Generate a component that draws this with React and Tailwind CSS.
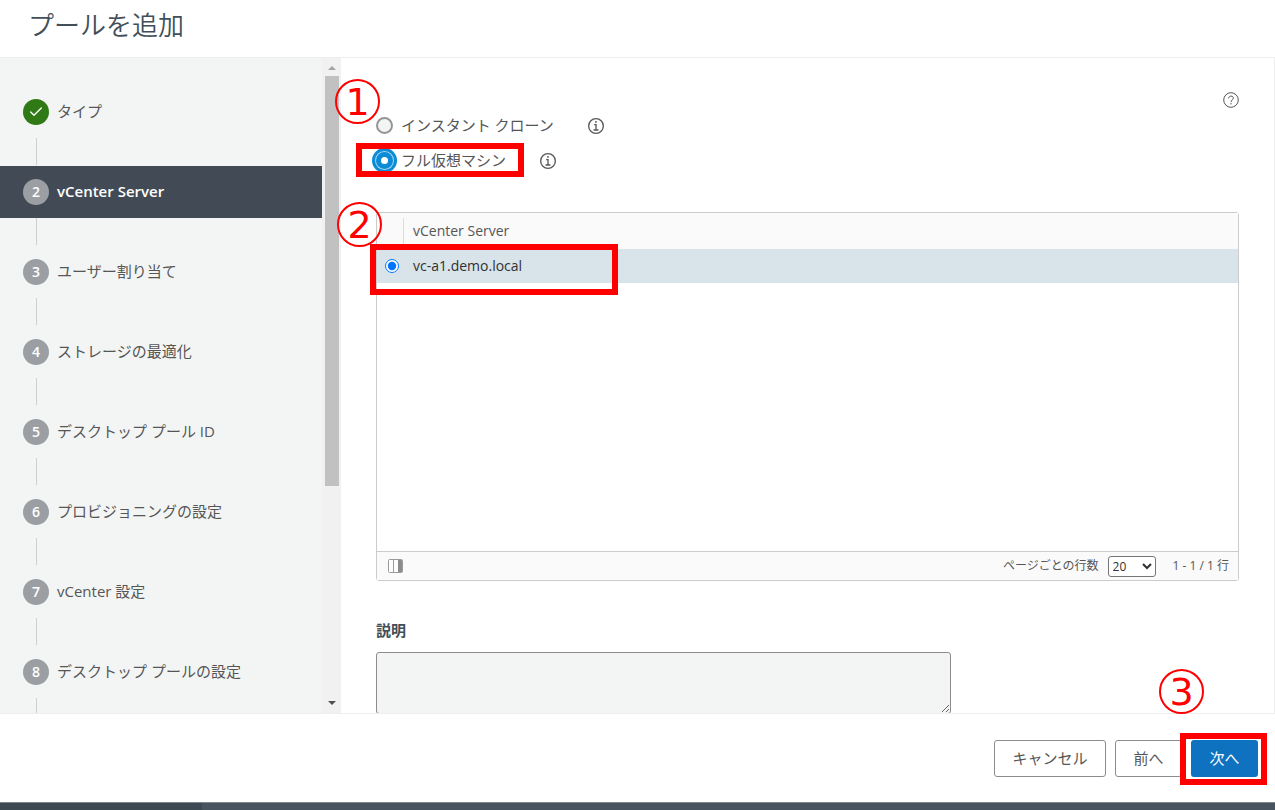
import React, { useState } from "react";
import { Check } from "lucide-react";

const steps = [
  "タイプ",
  "vCenter Server",
  "ユーザー割り当て",
  "ストレージの最適化",
  "デスクトップ プール ID",
  "プロビジョニングの設定",
  "vCenter 設定",
  "デスクトップ プールの設定",
];

const InfoIcon = () => (
  <svg viewBox="6 6 24 24" className="size-4" fill="currentColor">
    <circle cx="17.93" cy="11.9" r="1.4" />
    <path d="M21,23H19V15H16a1,1,0,0,0,0,2h1v6H15a1,1,0,1,0,0,2h6a1,1,0,0,0,0-2Z" />
    <path d="M18,6A12,12,0,1,0,30,18,12,12,0,0,0,18,6Zm0,22A10,10,0,1,1,28,18,10,10,0,0,1,18,28Z" />
  </svg>
);

const HelpIcon = () => (
  <svg viewBox="0 0 16 16" className="size-4" fill="none" stroke="currentColor">
    <circle cx="8" cy="8" r="7.3" strokeWidth="1" />
    <path d="M5.6 6.1C5.900 4.800 6.800 4.100 8 4.100c1.400 0 2.400.8 2.400 2C10.400 7.900 8 7.700 8 9.700" strokeWidth="1" strokeLinecap="round" />
    <circle cx="8" cy="11.800" r=".7" fill="currentColor" stroke="none" />
  </svg>
);

const ColumnsIcon = () => (
  <svg viewBox="0 0 15 14" className="h-[14px] w-[15px]">
    <rect x=".5" y=".5" width="14" height="13" rx="1" fill="#fff" stroke="#9a9a9a" />
    <path d="M5.500 1v12" stroke="#9a9a9a" />
    <path d="M10 1h4v12h-4z" fill="#8c8c8c" />
  </svg>
);

// Red numbered marker that sits over the screen
const Marker = ({ children, className }) => (
  <span
    className={`pointer-events-none absolute z-10 flex size-[45px] items-center justify-center rounded-full border-2 border-[#ff0000] font-['DejaVu_Sans',sans-serif] text-[38px] font-normal leading-none text-[#ff0000] ${className}`}
  >
    {children}
  </span>
);

const Sidebar = () => (
  <aside className="flex w-[341px] shrink-0 overflow-hidden bg-[#f3f5f5]">
    <ol className="flex-1 pt-7">
      {steps.map((step, i) => (
        <li key={step}>
          <a
            href={`#step-${i + 1}`}
            aria-current={i === 1 ? "step" : undefined}
            className={`flex h-[52px] items-center gap-2 pl-[23px] ${
              i === 1 ? "bg-[#424b55] font-semibold text-white" : ""
            }`}
          >
            <span
              className={`flex size-[26px] shrink-0 items-center justify-center rounded-full text-sm font-semibold text-white ${
                i === 0 ? "bg-[#2f7a14]" : "bg-[#9b9fa4]"
              }`}
            >
              {i === 0 ? <Check size={16} strokeWidth={2} /> : i + 1}
            </span>
            <span className="pb-0.5">{step}</span>
          </a>
          <div className="ml-9 h-7 pb-px">
            <div className="h-full w-px bg-[#cdd0d3]" />
          </div>
        </li>
      ))}
    </ol>
    <div className="flex w-[19px] flex-col items-center bg-[#f1f1f1]">
      <svg viewBox="0 0 8 18" className="h-[18px] w-2">
        <path d="M0 12l4-4 4 4z" fill="#a3a3a3" />
      </svg>
      <div className="h-[410px] w-[14px] bg-[#c1c1c1]" />
      <svg viewBox="0 0 8 18" className="mt-auto h-[18px] w-2">
        <path d="M0 6h8l-4 4z" fill="#505050" />
      </svg>
    </div>
  </aside>
);

const MachineTypes = ({ value, onChange }) => (
  <fieldset>
    <div className="relative flex h-[35px] items-center">
      <Marker className="-left-[41px] -top-[29px]">1</Marker>
      <label className="flex items-center gap-2">
        <input
          type="radio"
          name="machine"
          value="instant"
          checked={value === "instant"}
          onChange={onChange}
          className="m-0 size-[17px] appearance-none rounded-full border-2 border-[#959595] bg-[#f3f5f5] checked:border-[5px] checked:border-[#0c8bd6] checked:bg-white"
        />
        <span className="pb-0.5">インスタント クローン</span>
      </label>
      <button type="button" aria-label="情報" className="ml-[34px]">
        <InfoIcon />
      </button>
    </div>
    <div className="relative flex h-[35px] items-center">
      <span className="pointer-events-none absolute -left-5 top-0 h-[34px] w-[168px] border-[6px] border-[#ff0000]" />
      <label className="flex items-center gap-2">
        <input
          type="radio"
          name="machine"
          value="full"
          checked={value === "full"}
          onChange={onChange}
          className="m-0 size-[17px] appearance-none rounded-full border-2 border-[#959595] bg-[#f3f5f5] checked:border-[5px] checked:border-[#0c8bd6] checked:bg-white checked:shadow-[0_0_0_1px_#a5d8f3,0_0_0_4px_#0c8bd6]"
        />
        <span className="pb-0.5">フル仮想マシン</span>
      </label>
      <button type="button" aria-label="情報" className="ml-[34px]">
        <InfoIcon />
      </button>
    </div>
  </fieldset>
);

const ServerGrid = () => (
  <section className="mt-[34px] rounded-[3px] border border-[#cccccc] text-sm">
    <div className="min-h-[338px]">
      <table className="w-full border-collapse text-left">
        <thead>
          <tr className="h-9 bg-[#fafafa]">
            <th className="w-7 p-0 py-1">
              <div className="h-[26px] w-[27px] border-r border-[#dddddd]" />
            </th>
            <th className="px-2 py-0 font-normal">vCenter Server</th>
          </tr>
        </thead>
        <tbody>
          <tr className="h-[34px] bg-[#d9e4ea] text-[#313131]">
            <td className="relative p-0 pl-2">
              <span className="pointer-events-none absolute -left-[7px] -top-[5px] h-[51px] w-[248px] border-[6px] border-[#ff0000]" />
              <Marker className="-left-[40px] -top-[47px]">2</Marker>
              <input
                id="vc-a1"
                type="radio"
                name="server"
                defaultChecked
                className="block size-[14px]"
              />
            </td>
            <td className="px-2 py-0">
              <label htmlFor="vc-a1">vc-a1.demo.local</label>
            </td>
          </tr>
        </tbody>
      </table>
    </div>
    <div className="flex h-[29px] items-center border-t border-[#cccccc] bg-[#fafafa] pl-[11px] pr-[9px] text-xs">
      <button type="button" aria-label="列の表示">
        <ColumnsIcon />
      </button>
      <label htmlFor="rows" className="ml-auto mr-[9px]">
        ページごとの行数
      </label>
      <select
        id="rows"
        defaultValue="20"
        className="h-[21px] w-12 rounded-[3px] border border-[#767676] bg-white text-xs text-[#313131]"
      >
        <option>20</option>
        <option>50</option>
        <option>100</option>
      </select>
      <span className="ml-[17px]">1 - 1 / 1 行</span>
    </div>
  </section>
);

const App = () => {
  const [machine, setMachine] = useState("full");

  return (
    <div className="flex h-screen flex-col bg-white font-['Open_Sans','Noto_Sans_CJK_JP',sans-serif] text-[15px] leading-6 text-[#565656]">
      <header className="px-7 pb-3 pt-[5px]">
        <h1 className="text-[26px] font-[350] leading-10 text-[#424f58]">プールを追加</h1>
      </header>

      <div className="flex min-h-0 flex-1 overflow-hidden border-y border-[#eeeeee]">
        <Sidebar />
        <main className="min-w-0 flex-1 border-r border-[#eeeeee] px-[35px] pt-[34px]">
          <div className="flex justify-end">
            <button type="button" aria-label="ヘルプ">
              <HelpIcon />
            </button>
          </div>
          <MachineTypes value={machine} onChange={(e) => setMachine(e.target.value)} />
          <ServerGrid />
          <label htmlFor="description" className="mb-[10px] mt-[37px] block font-bold text-[#424f58]">
            説明
          </label>
          <textarea
            id="description"
            className="block h-[62px] w-[575px] max-w-full rounded-[3px] border border-[#8c8c8c] bg-[#f3f5f5]"
          />
        </main>
      </div>

      <footer className="flex justify-end gap-[9px] pb-[25px] pl-4 pr-[17px] pt-[26px]">
        <button type="button" className="h-[37px] w-28 rounded-[3px] border border-[#8c8c8c] pb-0.5">
          キャンセル
        </button>
        <button type="button" className="h-[37px] w-[67px] rounded-[3px] border border-[#8c8c8c] pb-0.5">
          前へ
        </button>
        <div className="relative">
          <button type="button" className="h-[37px] w-[67px] rounded-[3px] bg-[#0f72c0] pb-0.5 text-white">
            次へ
          </button>
          <span className="pointer-events-none absolute -bottom-2 -left-[11px] -right-[9px] -top-[7px] border-[6px] border-[#ff0000]" />
          <Marker className="-left-8 -top-[71px]">3</Marker>
        </div>
      </footer>

      <div className="flex h-2 border-t border-[#7d868d] bg-[#48545f]">
        <div className="w-[202px] bg-[#3e4a53]" />
      </div>
    </div>
  );
};

export default App;
